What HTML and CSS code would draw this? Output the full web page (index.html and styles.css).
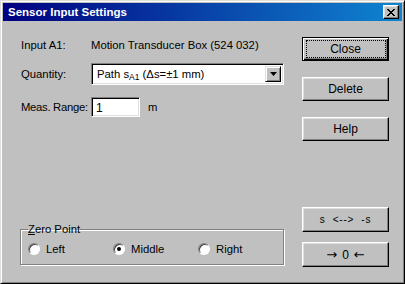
FILE: index.html
```html
<!DOCTYPE html>
<html lang="en">
<head>
  <meta charset="UTF-8" />
  <title>Sensor Input Settings</title>
  <link rel="stylesheet" href="styles.css">
</head>
<body>
  <div class="window">
    <div class="titlebar">
      <span class="title">Sensor Input Settings</span>
      <button class="title-btn" aria-label="Close">
        <svg width="8" height="7" viewBox="0 0 8 7">
          <path d="M0 0h2v1h1v1h2v-1h1v-1h2v1h-1v1h-1v1h-1v1h1v1h1v1h1v1h-2v-1h-1v-1h-2v1h-1v1h-2v-1h1v-1h1v-1h1v-1h-1v-1h-1v-1h-1z" fill="#000"/>
        </svg>
      </button>
    </div>

    <div class="content">
      <div class="left">
        <div class="row row-info">
          <span class="label">Input A1:</span>
          <span class="value">Motion Transducer Box (524 032)</span>
        </div>

        <div class="row row-select">
          <span class="label">Quantity:</span>
          <div class="select">
            <span class="select-text">Path s<sub>A1</sub> (Δs=±1 mm)</span>
            <span class="drop-btn">
              <svg width="7" height="4" viewBox="0 0 7 4"><path d="M0 0h7L3.5 4z" fill="#000"/></svg>
            </span>
          </div>
        </div>

        <div class="row row-range">
          <span class="label tight">Meas. Range:</span>
          <div class="textbox">1</div>
          <span class="unit">m</span>
        </div>

        <fieldset class="group">
          <legend><u>Z</u>ero Point</legend>
          <div class="radios">
            <label class="radio"><span class="dot"></span>Left</label>
            <label class="radio checked"><span class="dot"></span>Middle</label>
            <label class="radio"><span class="dot"></span>Right</label>
          </div>
        </fieldset>
      </div>

      <div class="right">
        <button class="btn default"><span class="focus">Close</span></button>
        <button class="btn">Delete</button>
        <button class="btn">Help</button>
        <div class="spacer"></div>
        <button class="btn tall small">s&nbsp;&nbsp;&lt;--&gt;&nbsp;&nbsp;-s</button>
        <button class="btn tall"><span class="arrow">→</span>0<span class="arrow">←</span></button>
      </div>
    </div>
  </div>
</body>
</html>
```

FILE: styles.css
```css
body {
  margin: 0;
  background: #c0c0c0;
  font-family: "Liberation Sans", Arial, sans-serif;
  font-size: 11.3px;
  color: #000;
}

.window {
  width: 405px;
  height: 284px;
  box-sizing: border-box;
  background: #c0c0c0;
  border: 1px solid;
  border-color: #dfdfdf #000 #000 #dfdfdf;
  box-shadow: inset 1px 1px #fff, inset -1px -1px #808080;
  padding: 2px;
  display: flex;
  flex-direction: column;
}

.titlebar {
  height: 18px;
  background: linear-gradient(to right, #000080, #1084d0);
  display: flex;
  align-items: center;
  justify-content: space-between;
  padding: 0 3px 0 5px;
}

.title {
  color: #fff;
  font-weight: bold;
  font-size: 11.5px;
}

.title-btn {
  width: 16px;
  height: 14px;
  padding: 0;
  background: #c0c0c0;
  border: 1px solid;
  border-color: #fff #000 #000 #fff;
  box-shadow: inset -1px -1px #808080, inset 1px 1px #dfdfdf;
  display: flex;
  align-items: center;
  justify-content: center;
}

.content {
  flex: 1;
  display: flex;
  padding: 16px 13px 14px 18px;
}

.left {
  width: 266px;
  display: flex;
  flex-direction: column;
}

.row {
  display: flex;
  align-items: center;
}

.label {
  width: 70px;
  flex-shrink: 0;
  white-space: nowrap;
}

.label.tight {
  letter-spacing: -0.3px;
}

.row-info {
  height: 16px;
}

.row-select {
  height: 22px;
  margin-top: 10px;
}

.row-range {
  height: 20px;
  margin-top: 12px;
}

.select {
  width: 193px;
  height: 22px;
  box-sizing: border-box;
  background: #fff;
  border: 1px solid;
  border-color: #808080 #fff #fff #808080;
  box-shadow: inset 1px 1px #000, inset -1px -1px #dfdfdf;
  display: flex;
  align-items: center;
  justify-content: space-between;
  padding: 2px 2px 2px 5px;
  font-size: 11.3px;
}

.select sub {
  font-size: 8.5px;
  vertical-align: -2px;
  line-height: 0;
}

.drop-btn {
  width: 16px;
  height: 16px;
  box-sizing: border-box;
  background: #c0c0c0;
  border: 1px solid;
  border-color: #dfdfdf #000 #000 #dfdfdf;
  box-shadow: inset 1px 1px #fff, inset -1px -1px #808080;
  display: flex;
  align-items: center;
  justify-content: center;
}

.textbox {
  width: 49px;
  height: 20px;
  box-sizing: border-box;
  background: #fff;
  border: 1px solid;
  border-color: #808080 #fff #fff #808080;
  box-shadow: inset 1px 1px #000, inset -1px -1px #dfdfdf;
  padding: 3px 0 0 4px;
  font-size: 12px;
}

.unit {
  margin-left: 8px;
}

.group {
  margin: auto 0 2px -1px;
  width: 264px;
  height: 41px;
  box-sizing: border-box;
  border: 1px solid #808080;
  box-shadow: 1px 1px #fff, inset 1px 1px #fff;
  padding: 0 0 0 7px;
}

.group legend {
  padding: 0;
  margin-left: 0;
  line-height: 11px;
}

.radios {
  display: grid;
  grid-template-columns: 85px 85px 85px;
  margin-top: 8px;
}

.radio {
  display: flex;
  align-items: center;
  gap: 6px;
}

.dot {
  width: 12px;
  height: 12px;
  box-sizing: border-box;
  border-radius: 50%;
  background: #fff;
  border: 1px solid;
  border-color: #808080 #fff #fff #808080;
  box-shadow: inset 1px 1px #404040;
  position: relative;
}

.checked .dot::after {
  content: "";
  position: absolute;
  left: 3px;
  top: 3px;
  width: 4px;
  height: 4px;
  border-radius: 50%;
  background: #000;
}

.right {
  width: 88px;
  margin-left: 18px;
  display: flex;
  flex-direction: column;
}

.btn {
  height: 24px;
  margin-bottom: 16px;
  padding: 0;
  font-family: inherit;
  font-size: 12px;
  color: #000;
  background: #c0c0c0;
  border: 1px solid;
  border-color: #fff #000 #000 #fff;
  box-shadow: inset -1px -1px #808080, inset 1px 1px #dfdfdf;
}

.btn.default {
  border: 1px solid #000;
  box-shadow: inset 1px 1px #fff, inset -1px -1px #000, inset -2px -2px #808080;
  display: flex;
  align-items: center;
  justify-content: center;
}

.focus {
  display: flex;
  align-items: center;
  justify-content: center;
  width: 78px;
  height: 16px;
  border: 1px dotted #000;
}

.spacer {
  flex: 1;
}

.btn.tall {
  height: 25px;
  margin-bottom: 0;
}

.btn.tall + .btn.tall {
  margin-top: 10px;
}

.btn.small {
  font-size: 10px;
  letter-spacing: 0.8px;
}

.arrow {
  font-family: "DejaVu Sans", sans-serif;
  font-size: 13px;
  margin: 0 5px;
}
```
